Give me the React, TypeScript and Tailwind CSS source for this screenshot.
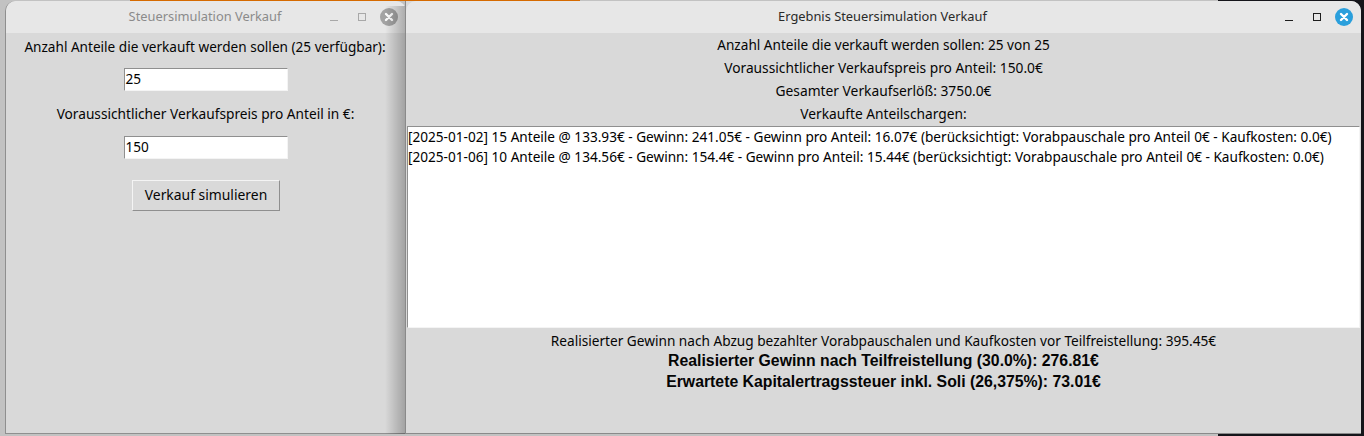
function WinButtons({ active }: { active: boolean }) {
  const line = active ? "#1d1d1d" : "#a8a8a8";
  return (
    <div className="flex items-center">
      <svg width="10" height="10" viewBox="0 0 10 10" className="mr-[18px]">
        <rect x="1" y="8" width="8" height="1" fill={line} />
      </svg>
      <svg width="10" height="10" viewBox="0 0 10 10" className="mr-[13px]">
        <rect x="1.5" y="1.5" width="7" height="7" fill="none" stroke={line} strokeWidth="1" />
      </svg>
      <svg width="18" height="18" viewBox="0 0 18 18">
        <circle cx="9" cy="9" r="9" fill={active ? "#2a9fdc" : "#a3a3a3"} />
        <path d="M6 6l6 6M12 6l-6 6" stroke="#fff" strokeWidth="2.4" strokeLinecap="round" />
      </svg>
    </div>
  );
}

function TitleBar({ title, active }: { title: string; active: boolean }) {
  return (
    <div className="relative flex h-[32px] shrink-0 items-center justify-end rounded-t-[10px] bg-[#e7e7e7] pr-[8px]">
      <div
        className={
          "absolute inset-x-0 top-0 flex h-full items-center justify-center pr-[2px] text-[12.85px] " +
          (active ? "text-[#2a2a2a]" : "text-[#8b8b8b]")
        }
      >
        {title}
      </div>
      <div className="relative">
        <WinButtons active={active} />
      </div>
    </div>
  );
}

function Field({ value }: { value: string }) {
  return (
    <div className="flex h-[23px] w-[164px] items-center border border-[#f4f4f4] border-t-[#8f8f8f] border-l-[#8f8f8f] bg-white pl-[1px] text-[13.6px] text-black">
      {value}
    </div>
  );
}

const lots = [
  "[2025-01-02] 15 Anteile @ 133.93€ - Gewinn: 241.05€ - Gewinn pro Anteil: 16.07€ (berücksichtigt: Vorabpauschale pro Anteil 0€ - Kaufkosten: 0.0€)",
  "[2025-01-06] 10 Anteile @ 134.56€ - Gewinn: 154.4€ - Gewinn pro Anteil: 15.44€ (berücksichtigt: Vorabpauschale pro Anteil 0€ - Kaufkosten: 0.0€)",
];

export default function App() {
  return (
    <div className="relative h-[436px] w-[1364px] overflow-hidden bg-[#c2c2c2] font-['Noto_Sans',sans-serif] text-[13.6px] text-[#050505]">
      {/* desktop behind the windows */}
      <div className="absolute left-[130px] top-0 h-[1px] w-[450px] bg-[#d56a00]" />
      <div className="absolute right-0 top-0 h-full w-[146px] bg-[#15151a]" />

      {/* input window */}
      <div className="absolute left-[5px] top-[1px] flex h-[433px] w-[401px] flex-col rounded-t-[10px] border-l border-b border-[#8f8f8f] bg-[#d9d9d9]">
        <TitleBar title="Steuersimulation Verkauf" active={false} />
        <div className="flex flex-col items-center pt-[2px]">
          <div className="flex h-[24px] items-center pr-[2px]">Anzahl Anteile die verkauft werden sollen (25 verfügbar):</div>
          <div className="mt-[9px] pr-[1px]">
            <Field value="25" />
          </div>
          <div className="mt-[10px] flex h-[26px] items-center pr-[1px] text-[13.7px]">Voraussichtlicher Verkaufspreis pro Anteil in €:</div>
          <div className="mt-[9px] pr-[1px]">
            <Field value="150" />
          </div>
          <button className="mt-[21px] h-[31px] w-[148px] border border-[#f4f4f4] border-r-[#8f8f8f] border-b-[#8f8f8f] bg-[#d9d9d9] text-[13.9px] text-[#050505]">
            Verkauf simulieren
          </button>
        </div>
      </div>

      {/* shadow of the result window on the input window */}
      <div className="absolute left-[385px] top-[6px] h-[428px] w-[20px] bg-gradient-to-r from-transparent to-[#00000040]" />

      {/* result window */}
      <div className="absolute left-[405px] top-[1px] flex h-[433px] w-[956px] flex-col rounded-tr-[10px] border-l border-b border-[#8a8a8a] bg-[#d9d9d9]">
        <TitleBar title="Ergebnis Steuersimulation Verkauf" active />
        <div className="flex flex-col items-center pt-[1px] text-center">
          <div className="flex h-[23px] items-center">Anzahl Anteile die verkauft werden sollen: 25 von 25</div>
          <div className="flex h-[23px] items-center text-[13.75px]">Voraussichtlicher Verkaufspreis pro Anteil: 150.0€</div>
          <div className="flex h-[23px] items-center text-[13.8px]">Gesamter Verkaufserlöß: 3750.0€</div>
          <div className="flex h-[23px] items-center text-[13.75px]">Verkaufte Anteilschargen:</div>
        </div>
        <div className="ml-[1px] mr-[1px] h-[202px] border border-[#f4f4f4] border-t-[#8f8f8f] border-l-[#8f8f8f] bg-white text-[13.62px] text-black">
          {lots.map((lot) => (
            <div key={lot} className="flex h-[20px] items-center whitespace-nowrap">
              {lot}
            </div>
          ))}
        </div>
        <div className="flex flex-col items-center pt-[3px]">
          <div className="flex h-[21px] items-center text-[13.65px]">
            Realisierter Gewinn nach Abzug bezahlter Vorabpauschalen und Kaufkosten vor Teilfreistellung: 395.45€
          </div>
          <div className="-mt-[1px] flex h-[20px] items-center font-['Liberation_Sans',sans-serif] text-[15.8px] font-bold">
            Realisierter Gewinn nach Teilfreistellung (30.0%): 276.81€
          </div>
          <div className="mt-[1px] flex h-[20px] items-center font-['Liberation_Sans',sans-serif] text-[15.8px] font-bold">
            Erwartete Kapitalertragssteuer inkl. Soli (26,375%): 73.01€
          </div>
        </div>
      </div>
    </div>
  );
}
